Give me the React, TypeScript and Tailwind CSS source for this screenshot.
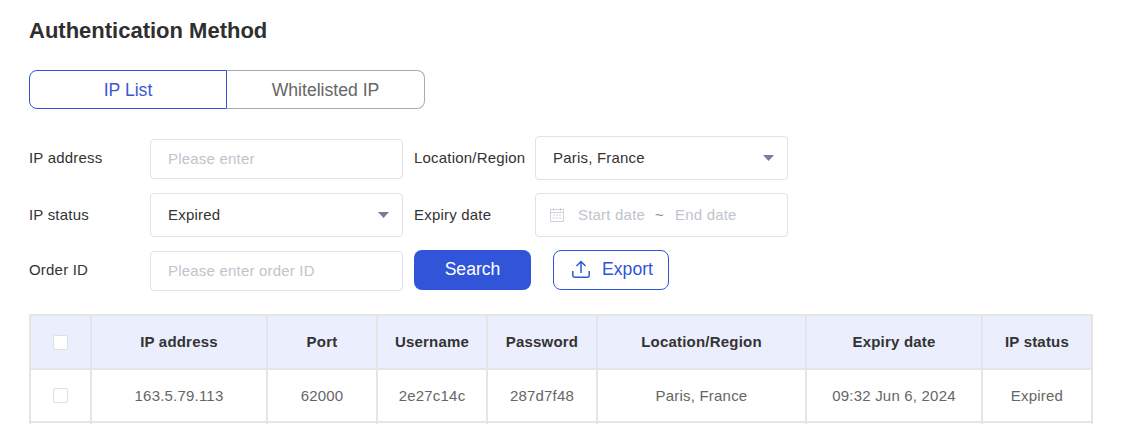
const columns = [
  { label: "IP address", value: "163.5.79.113" },
  { label: "Port", value: "62000" },
  { label: "Username", value: "2e27c14c" },
  { label: "Password", value: "287d7f48" },
  { label: "Location/Region", value: "Paris, France" },
  { label: "Expiry date", value: "09:32 Jun 6, 2024" },
  { label: "IP status", value: "Expired" },
];

function Caret() {
  return (
    <svg width="11" height="6" viewBox="0 0 11 6" className="shrink-0">
      <path d="M0 0h11L5.500 6z" fill="#7d7a9c" />
    </svg>
  );
}

function CalendarIcon() {
  return (
    <svg width="14" height="14" viewBox="0 0 14 14" fill="none" stroke="#d0d3da" strokeWidth="1" className="shrink-0">
      <rect x="0.5" y="1.5" width="13" height="12" />
      <path d="M0.5 4.5h13M3.500 0v3M10.500 0v3" />
      <path d="M3 7h2M6 7h2M9 7h2M3 10h2M6 10h2M9 10h2" />
    </svg>
  );
}

function UploadIcon() {
  return (
    <svg width="18" height="18" viewBox="0 0 18 18" fill="none" stroke="#3055d8" strokeWidth="1.5" className="shrink-0">
      <path d="M9 13V1.500M4.500 6 9 1.500 13.500 6" />
      <path d="M0.800 11v4.500a1.700 1.700 0 0 0 1.700 1.700h13a1.700 1.700 0 0 0 1.700-1.700V11" />
    </svg>
  );
}

function Checkbox() {
  return <span className="block w-[15px] h-[15px] mx-auto bg-white border border-[#dcdfe6] rounded-[2px]" />;
}

export default function App() {
  return (
    <div className="h-[424px] overflow-hidden bg-white pl-[29px] pr-7 font-['Liberation_Sans',Arial,sans-serif] text-[15px] tracking-[0.2px] text-[#333]">
      <h2 className="pt-[18px] text-[22px] leading-[25px] font-bold tracking-normal text-[#2f2f2f]">Authentication Method</h2>

      <div className="flex mt-[27px] w-[396px] h-[39px] text-[17.6px] tracking-normal">
        <div className="w-[198px] pt-px flex items-center justify-center border border-[#3055d8] rounded-l-lg text-[#3a57d6]">IP List</div>
        <div className="w-[198px] pt-px flex items-center justify-center border border-l-0 border-[#aaaaaa] rounded-r-lg text-[#666]">Whitelisted IP</div>
      </div>

      <div className="mt-[27px] grid grid-cols-[110px_253px_110px_253px] gap-x-[11px] gap-y-[13px] w-[759px] auto-rows-[44px]">
        <label className="self-center">IP address</label>
        <div className="mt-[3px] h-10 flex items-center px-[17px] border border-[#e0e1ea] rounded text-[#c0c4cc]">Please enter</div>
        <label className="self-center">Location/Region</label>
        <div className="h-11 flex items-center justify-between pl-[17px] pr-[13px] border border-[#e0e1ea] rounded">
          Paris, France
          <Caret />
        </div>

        <label className="self-center">IP status</label>
        <div className="h-11 flex items-center justify-between pl-[17px] pr-[13px] border border-[#e0e1ea] rounded">
          Expired
          <Caret />
        </div>
        <label className="self-center">Expiry date</label>
        <div className="h-11 flex items-center px-[14px] border border-[#e0e1ea] rounded text-[#c0c4cc]">
          <CalendarIcon />
          <span className="ml-[14px]">Start date</span>
          <span className="ml-[10px] mr-[11px] text-[#888]">~</span>
          <span>End date</span>
        </div>

        <label className="self-center -mt-[3px]">Order ID</label>
        <div className="mt-px h-10 flex items-center px-[17px] border border-[#e0e1ea] rounded text-[#c0c4cc]">Please enter order ID</div>
        <div className="col-span-2 flex gap-[22px] h-10 text-[17.6px] tracking-normal">
          <button className="w-[117px] h-10 pb-0.5 bg-[#3055d8] text-white rounded-lg">Search</button>
          <button className="w-[116px] h-10 pl-[3px] pb-0.5 flex items-center justify-center gap-[12px] border border-[#3055d8] text-[#3055d8] rounded-lg">
            <UploadIcon />
            Export
          </button>
        </div>
      </div>

      <table className="mt-5 w-[1064px] table-fixed border-collapse text-center">
        <colgroup>
          <col className="w-[61px]" />
          <col className="w-[176px]" />
          <col className="w-[110px]" />
          <col className="w-[110px]" />
          <col className="w-[110px]" />
          <col className="w-[209px]" />
          <col className="w-[176px]" />
          <col className="w-[110px]" />
        </colgroup>
        <thead>
          <tr className="h-[54px] bg-[#ebeefd]">
            <th className="border-2 border-[#e5e5e5]"><Checkbox /></th>
            {columns.map((c) => (
              <th key={c.label} className="border-2 border-[#e5e5e5] font-bold text-[#333]">{c.label}</th>
            ))}
          </tr>
        </thead>
        <tbody>
          <tr className="h-[53px]">
            <td className="border-2 border-[#e5e5e5]"><Checkbox /></td>
            {columns.map((c) => (
              <td key={c.label} className="border-2 border-[#e5e5e5] pt-0.5 text-[#666]">{c.value}</td>
            ))}
          </tr>
          <tr className="h-[53px]">
            <td className="border-2 border-[#e5e5e5]" />
            {columns.map((c) => (
              <td key={c.label} className="border-2 border-[#e5e5e5]" />
            ))}
          </tr>
        </tbody>
      </table>
    </div>
  );
}
